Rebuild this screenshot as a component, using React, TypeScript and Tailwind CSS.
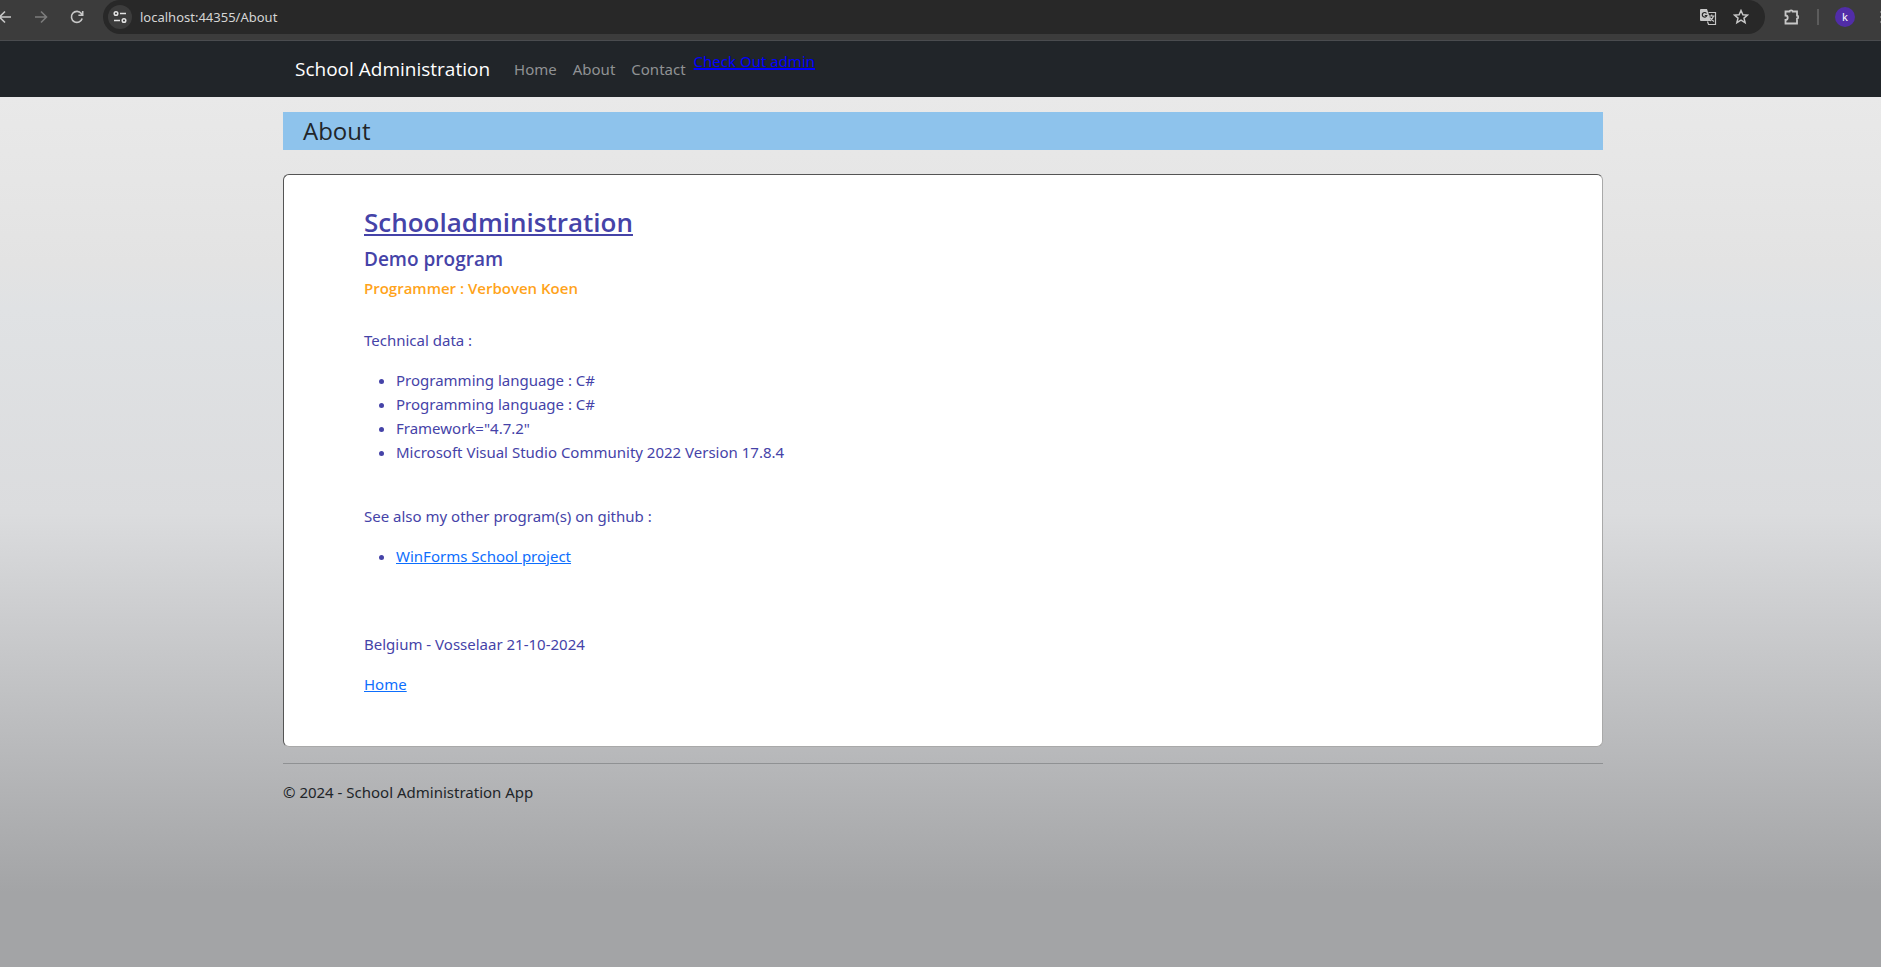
import React from "react";

const navLinks = ["Home", "About", "Contact"];
const technical = [
  "Programming language : C#",
  "Programming language : C#",
  'Framework="4.7.2"',
  "Microsoft Visual Studio Community 2022 Version 17.8.4",
];

function BrowserBar() {
  return (
    <div className="flex h-[41px] items-start overflow-hidden border-b border-[#4a4c4f] bg-[#3c3c3c] text-[#c7c7c7]">
      <div className="flex h-[34px] w-[103px] shrink-0 items-center">
        <button aria-label="Back" className="-ml-[3px] w-[38px] shrink-0">
          <svg width="16" height="16" viewBox="0 0 16 16" fill="none" stroke="currentColor" strokeWidth="1.6">
            <path d="M14 8H3M8 2.5 2.5 8 8 13.5" />
          </svg>
        </button>
        <button aria-label="Forward" className="w-[34px] shrink-0 text-[#7c7c7c]">
          <svg width="16" height="16" viewBox="0 0 16 16" fill="none" stroke="currentColor" strokeWidth="1.6">
            <path d="M0 8h11M6 2.5 11.5 8 6 13.5" />
          </svg>
        </button>
        <button aria-label="Reload" className="w-[34px] shrink-0">
          <svg width="16" height="16" viewBox="0 0 16 16" fill="none" stroke="currentColor" strokeWidth="1.6">
            <path d="M13.2 9.5A5.5 5.5 0 1 1 12.3 4.5L13.6 6M13.7 2v4.3H9.4" />
          </svg>
        </button>
      </div>
      <div className="flex h-[34px] min-w-0 flex-1 items-center rounded-full bg-[#282828] pl-[5px] pr-4">
        <button aria-label="Site information" className="flex h-6 w-6 shrink-0 items-center justify-center rounded-full bg-[#3c3c3c] text-[#e3e3e3]">
          <svg width="14" height="14" viewBox="0 0 14 14" fill="none" stroke="currentColor" strokeWidth="1.5">
            <circle cx="3" cy="3.5" r="1.8" />
            <path d="M7 3.5h6M1 10.5h6" />
            <circle cx="11" cy="10.5" r="1.8" />
          </svg>
        </button>
        <input
          aria-label="Address"
          defaultValue="localhost:44355/About"
          className="ml-2 min-w-0 flex-1 bg-transparent font-['Noto_Sans',sans-serif] text-[13px] leading-5 text-[#d5d5d5] outline-none"
        />
        <button aria-label="Translate">
          <svg width="18" height="18" viewBox="0 0 18 18" fill="none">
            <path d="M2 1h6l4 12H2a1 1 0 0 1-1-1V2a1 1 0 0 1 1-1z" fill="#c7c7c7" />
            <path d="M7.5 5.5A2.3 2.3 0 1 0 7.8 7.5H5.8" stroke="#282828" strokeWidth="1.2" />
            <path d="M9.5 4.5H16.5V16.5H9.5L8.5 13.5M10 8h5.5M12.7 6.5V8M14.5 8c-.5 2-2 4-3.5 5M11 9.5c.8 1.5 2 3 4 4" stroke="#c7c7c7" strokeWidth="1.2" />
          </svg>
        </button>
        <button aria-label="Bookmark" className="ml-4">
          <svg width="16" height="16" viewBox="0 0 16 16" fill="none" stroke="currentColor" strokeWidth="1.5">
            <path d="m8 1.5 1.9 4.2 4.6.4-3.5 3 1.1 4.5L8 11.2l-4.1 2.4L5 9.100l-3.5-3 4.600-.4z" />
          </svg>
        </button>
      </div>
      <div className="flex h-[34px] w-[116px] shrink-0 items-center">
        <button aria-label="Extensions" className="ml-[18px] shrink-0">
          <svg width="18" height="18" viewBox="0 0 18 18" fill="none" stroke="currentColor" strokeWidth="1.8">
            <path d="M2.5 3.5H6.5a1.6 1.2 0 0 1 3.2 0H14v4a1.2 1.6 0 0 1 0 3.2V15.5H2.5v-3.6a2.2 2.2 0 0 0 0-4.4z" />
          </svg>
        </button>
        <span className="ml-4 h-4 w-[2px] shrink-0 bg-[#5c5c5c]" />
        <button aria-label="Profile" className="ml-4 flex h-5 w-5 shrink-0 items-center justify-center rounded-full bg-[#512da8] text-[11px] text-white">
          k
        </button>
        <button aria-label="Menu" className="ml-6 shrink-0">
          <svg width="5" height="16" viewBox="0 0 5 16" fill="currentColor">
            <circle cx="3" cy="3" r="1.5" />
            <circle cx="3" cy="8" r="1.5" />
            <circle cx="3" cy="13" r="1.5" />
          </svg>
        </button>
      </div>
    </div>
  );
}

export default function App() {
  return (
    <div className="flex min-h-screen flex-col font-['Noto_Sans','Open_Sans',sans-serif] text-[15px] leading-6 text-[#212529]">
      <BrowserBar />
      <div className="flex-1 bg-[linear-gradient(to_bottom,#e9e9e9_6%,#e3e3e3_24%,#e0e2e4_29%,#dbdcde_51%,#a3a4a6_92%)]">
        <nav className="h-14 bg-[#212529] pl-[5px]">
          <div className="mx-auto flex h-full max-w-[1320px] items-center px-3">
            <a href="#home" className="mr-4 font-['Open_Sans',sans-serif] text-[19px] text-white">School Administration</a>
            <ul className="flex">
              {navLinks.map((n) => (
                <li key={n}>
                  <a href={"#" + n} className="px-2 text-[#909294]">{n}</a>
                </li>
              ))}
            </ul>
            <a href="#admin" className="self-start pt-2 text-[#0000ff] underline decoration-2 underline-offset-1">Check Out admin</a>
          </div>
        </nav>
        <div className="pl-[5px]">
          <div className="mx-auto max-w-[1320px]">
            <h1 className="mt-[15px] h-[38px] bg-[#8ec3ec] px-5 font-['Open_Sans',sans-serif] text-[24px] leading-[38px]">About</h1>
            <main className="mt-6 rounded-[6px] border border-b-[#a9a9a9] border-l-[#545454] border-r-[#a9a9a9] border-t-[#545454] bg-white px-20 pb-[50px] pt-[30px] text-[#4543a8]">
              <div className="font-['Open_Sans',sans-serif] font-semibold">
                <h2 className="text-[26px] leading-[34px] underline">Schooladministration</h2>
                <h3 className="mt-2 text-[19px] leading-6">Demo program</h3>
                <h4 className="mt-[5px] text-[#ffa31a]">Programmer : Verboven Koen</h4>
              </div>
              <p className="mt-7">Technical data :</p>
              <ul className="mt-4 list-disc pl-8">
                {technical.map((t, i) => (
                  <li key={i}>{t}</li>
                ))}
              </ul>
              <p className="mt-10">See also my other program(s) on github :</p>
              <ul className="mt-4 list-disc pl-8">
                <li>
                  <a href="#project" className="text-[#0d6efd] underline">WinForms School project</a>
                </li>
              </ul>
              <p className="mt-16">Belgium - Vosselaar 21-10-2024</p>
              <p className="mt-4">
                <a href="#home" className="text-[#0d6efd] underline">Home</a>
              </p>
            </main>
            <footer className="mt-4 border-t border-[#8f9193] pt-4">© 2024 - School Administration App</footer>
          </div>
        </div>
      </div>
    </div>
  );
}
